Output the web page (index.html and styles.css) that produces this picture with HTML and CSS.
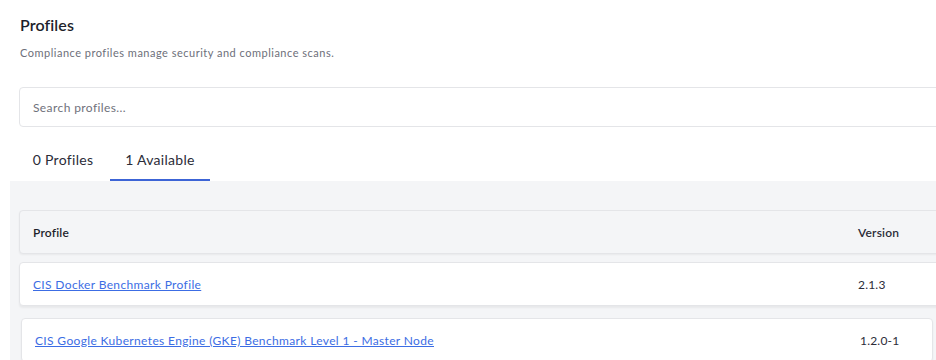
FILE: index.html
```html
<!DOCTYPE html>
<html lang="en">
<head>
    <meta charset="UTF-8">
    <title>Profiles</title>
    <link rel="stylesheet" href="styles.css">
</head>
<body>
    <div class="page">
        <div class="page-header">
            <h1>Profiles</h1>
            <p class="subtitle">Compliance profiles manage security and compliance scans.</p>
        </div>

        <div class="search-box">
            <input type="text" class="search-input" placeholder="Search profiles...">
        </div>

        <!-- Pestañas -->
        <div class="tabs">
            <div class="tab">0 Profiles</div>
            <div class="tab active">1 Available</div>
        </div>

        <div class="panel">
            <div class="table">
                <div class="table-head">
                    <span class="col-name">Profile</span>
                    <span class="col-version">Version</span>
                </div>
                <div class="table-row">
                    <span class="col-name"><a href="#" class="profile-link">CIS Docker Benchmark Profile</a></span>
                    <span class="col-version">2.1.3</span>
                </div>
                <div class="table-row lifted">
                    <span class="col-name"><a href="#" class="profile-link">CIS Google Kubernetes Engine (GKE) Benchmark Level 1 - Master Node</a></span>
                    <span class="col-version">1.2.0-1</span>
                </div>
            </div>
        </div>
    </div>
</body>
</html>
```

FILE: styles.css
```css
:root {
    --text-color: #1e1f2c;
    --muted-color: #6d6f7a;
    --border-color: #e4e5e8;
    --panel-color: #f4f5f7;
    --link-color: #3c6de4;
}

* {
    margin: 0;
    padding: 0;
    box-sizing: border-box;
    font-family: 'Lato', 'Open Sans', sans-serif;
}

body {
    background-color: #ffffff;
    overflow: hidden;
}

.page {
    width: 980px;
    height: 100vh;
    padding-top: 14px;
    display: flex;
    flex-direction: column;
    overflow: hidden;
}

.page-header {
    padding-left: 20px;
}

h1 {
    font-size: 16px;
    font-weight: 600;
    color: var(--text-color);
    line-height: 22px;
    letter-spacing: 0.1px;
}

.subtitle {
    margin-top: 9px;
    font-size: 11px;
    color: var(--muted-color);
    line-height: 16px;
    letter-spacing: 0.5px;
}

.search-box {
    margin: 26px 0 0 19px;
}

.search-input {
    width: 100%;
    height: 40px;
    border: 1px solid var(--border-color);
    border-radius: 4px;
    padding: 0 13px;
    font-size: 12px;
    letter-spacing: 0.4px;
    color: var(--text-color);
    outline: none;
}

.search-input::placeholder {
    color: #6f717b;
}

.tabs {
    display: flex;
    margin: 14px 0 0 16px;
}

.tab {
    padding: 10px 0 11px;
    width: 100px;
    text-align: center;
    font-size: 14px;
    letter-spacing: 0.3px;
    color: #2b2c38;
    border-bottom: 2px solid transparent;
}

.tab:first-child {
    width: 94px;
}

.tab.active {
    border-bottom-color: #3c64d6;
}

.panel {
    flex: 1;
    background-color: var(--panel-color);
    margin-left: 10px;
    padding: 29px 0 0 9px;
    overflow: hidden;
}

.table {
    display: flex;
    flex-direction: column;
    gap: 8px;
}

.table-head, .table-row {
    display: flex;
    align-items: center;
    flex: none;
    height: 44px;
    padding: 0 13px;
    border: 1px solid var(--border-color);
    border-radius: 4px;
    font-size: 12px;
}

.table-head {
    background-color: var(--panel-color);
    color: var(--text-color);
    font-weight: 600;
    letter-spacing: 0.2px;
    box-shadow: 0 1px 2px rgba(0, 0, 0, 0.05);
}

.table-row {
    background-color: #ffffff;
    box-shadow: 0 2px 2px rgba(0, 0, 0, 0.05);
}

/* Fila que se está moviendo */
.table-row.lifted {
    margin: 4px 47px 0 2px;
}

.col-name {
    flex: none;
    width: 825px;
}

.col-version {
    flex: none;
    color: #2b2c38;
    letter-spacing: 0.2px;
}

.profile-link {
    color: var(--link-color);
    text-decoration: underline;
    letter-spacing: 0.35px;
}
```
